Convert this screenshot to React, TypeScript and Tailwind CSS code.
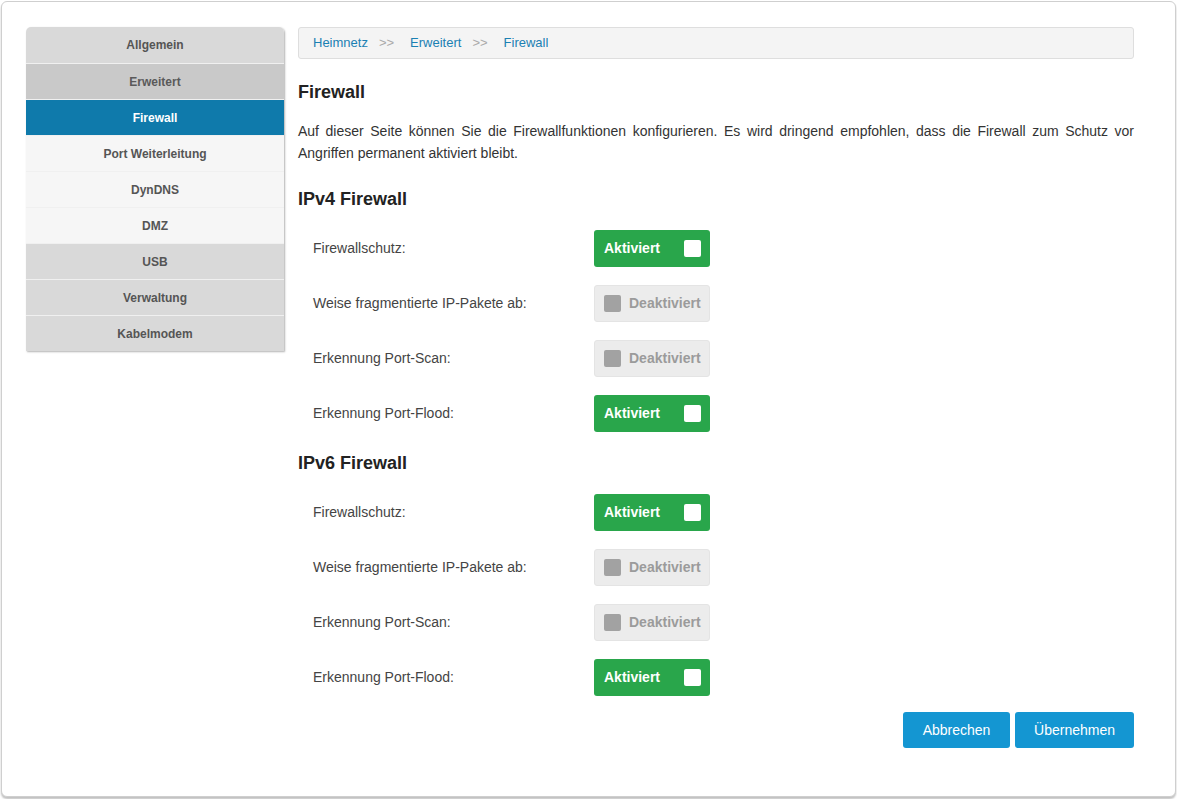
import { useState } from "react";

type Row = { label: string; on: boolean };

const nav = [
  { name: "Allgemein", tone: "top" },
  { name: "Erweitert", tone: "open" },
  { name: "Firewall", tone: "active" },
  { name: "Port Weiterleitung", tone: "sub" },
  { name: "DynDNS", tone: "sub" },
  { name: "DMZ", tone: "sub" },
  { name: "USB", tone: "top" },
  { name: "Verwaltung", tone: "top" },
  { name: "Kabelmodem", tone: "top" },
];

const toneClass: Record<string, string> = {
  top: "bg-[#d9d9d9] text-[#555]",
  open: "bg-[#c9c9c9] text-[#5a5a5a]",
  active: "bg-[#0f7aab] text-white",
  sub: "bg-[#f6f6f6] text-[#555]",
};

function Toggle({ on, onClick }: { on: boolean; onClick: () => void }) {
  if (on) {
    return (
      <button
        onClick={onClick}
        className="flex h-[37px] w-[116px] items-center justify-between rounded-[3px] bg-[#29a64b] pl-[10px] pr-[9px] text-[14px] font-bold text-white"
      >
        <span>Aktiviert</span>
        <span className="h-[17px] w-[17px] rounded-[2px] bg-white" />
      </button>
    );
  }
  return (
    <button
      onClick={onClick}
      className="flex h-[37px] w-[116px] items-center gap-[8px] rounded-[3px] border border-[#e4e4e4] bg-[#ececec] pl-[9px] text-[14px] font-bold text-[#9b9b9b]"
    >
      <span className="h-[17px] w-[17px] rounded-[2px] bg-[#a2a2a2]" />
      <span>Deaktiviert</span>
    </button>
  );
}

function Section({ title, init }: { title: string; init: Row[] }) {
  const [rows, setRows] = useState(init);
  const flip = (i: number) =>
    setRows(rows.map((r, j) => (j === i ? { ...r, on: !r.on } : r)));
  return (
    <>
      <h2 className="text-[18px] font-bold leading-[24px] text-[#222]">{title}</h2>
      <div className="mt-[19px] flex flex-col gap-[18px]">
        {rows.map((r, i) => (
          <div key={r.label} className="flex items-center">
            <div className="w-[296px] pl-[15px] text-[14px] text-[#444]">{r.label}</div>
            <Toggle on={r.on} onClick={() => flip(i)} />
          </div>
        ))}
      </div>
    </>
  );
}

const rowsFor = (): Row[] => [
  { label: "Firewallschutz:", on: true },
  { label: "Weise fragmentierte IP-Pakete ab:", on: false },
  { label: "Erkennung Port-Scan:", on: false },
  { label: "Erkennung Port-Flood:", on: true },
];

export default function App() {
  return (
    <div className="min-h-screen bg-white p-px font-['Liberation_Sans',Arial,sans-serif]">
      <div className="flex h-[796px] gap-[14px] rounded-[6px] border border-[#cfcfcf] bg-white pl-[24px] pt-[25px] shadow-[0_2px_2px_rgba(0,0,0,0.25)]">
        {/* side menu */}
        <div className="w-[258px] self-start">
          <nav className="overflow-hidden rounded-t-[5px] shadow-[1px_1px_2px_rgba(0,0,0,0.3)]">
            {nav.map((n, i) => (
              <div
                key={n.name}
                className={`flex h-[36px] items-center justify-center text-[12px] font-bold ${toneClass[n.tone]} ${
                  i > 0 ? "border-t border-[#f0f0f0]" : ""
                }`}
              >
                {n.name}
              </div>
            ))}
          </nav>
        </div>

        {/* main */}
        <div className="w-[836px]">
          <div className="flex h-[32px] items-center rounded-[3px] border border-[#dedede] bg-[#f4f4f4] pl-[14px] text-[13px]">
            <a className="text-[#1b80b3]">Heimnetz</a>
            <span className="pl-[11px] pr-[16px] text-[#aaa]">&gt;&gt;</span>
            <a className="text-[#1b80b3]">Erweitert</a>
            <span className="pl-[11px] pr-[16px] text-[#aaa]">&gt;&gt;</span>
            <a className="text-[#1b80b3]">Firewall</a>
          </div>

          <h1 className="mt-[21px] text-[18px] font-bold leading-[24px] text-[#222]">Firewall</h1>
          <p className="mt-[16px] text-justify text-[14px] leading-[22px] text-[#333]">
            Auf dieser Seite können Sie die Firewallfunktionen konfigurieren. Es wird dringend empfohlen, dass die
            Firewall zum Schutz vor Angriffen permanent aktiviert bleibt.
          </p>

          <div className="mt-[23px]">
            <Section title="IPv4 Firewall" init={rowsFor()} />
          </div>
          <div className="mt-[19px]">
            <Section title="IPv6 Firewall" init={rowsFor()} />
          </div>

          <div className="mt-[16px] flex justify-end gap-[5px]">
            <button className="h-[36px] w-[107px] rounded-[3px] bg-[#1496d2] text-[14px] text-white">Abbrechen</button>
            <button className="h-[36px] w-[119px] rounded-[3px] bg-[#1496d2] text-[14px] text-white">Übernehmen</button>
          </div>
        </div>
      </div>
    </div>
  );
}
